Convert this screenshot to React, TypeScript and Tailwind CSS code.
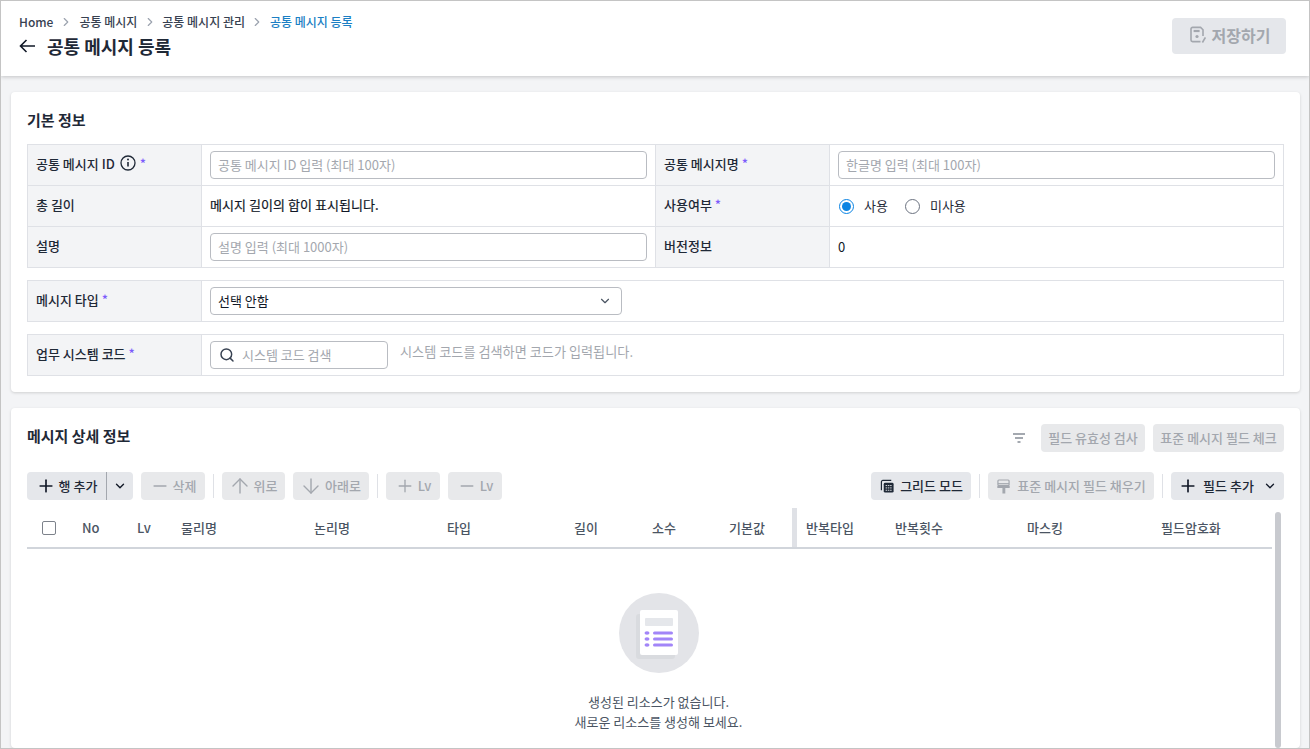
import { ArrowDown, ArrowUp, ChevronDown, ChevronRight, Minus, Plus, Search } from "lucide-react";
import type { ReactNode } from "react";

function Star() {
  return <span className="text-[#7c5cfc] ml-[3px]">*</span>;
}

function Label({ children, star }: { children: ReactNode; star?: boolean }) {
  return (
    <div className="w-[174px] shrink-0 bg-[#f3f4f6] border-r border-[#dfe1e6] pl-[8px] pb-[3px] flex items-center text-[13px] font-medium text-[#1f2937]">
      {children}
      {star && <Star />}
    </div>
  );
}

function TextBox({ placeholder }: { placeholder: string }) {
  return (
    <div className="h-[28px] w-full border border-[#b9bcc2] rounded-[4px] bg-white px-[7px] flex items-center text-[13px] text-[#a3a7ae]">
      {placeholder}
    </div>
  );
}

function Btn({ children, on, className = "" }: { children: ReactNode; on?: boolean; className?: string }) {
  return (
    <div
      className={`h-[28px] rounded-[4px] flex items-center justify-center text-[13px] font-medium whitespace-nowrap ${
        on ? "bg-[#e5e7eb] text-[#1f2937]" : "bg-[#e8e9eb] text-[#a3a7ae]"
      } ${className}`}
    >
      {children}
    </div>
  );
}

function Sep() {
  return <div className="w-px h-[24px] bg-[#dfe1e6] mx-[8px]" />;
}

const leftCols = [
  { name: "No", w: "w-[55px]" },
  { name: "Lv", w: "w-[44px]" },
  { name: "물리명", w: "w-[133px]" },
  { name: "논리명", w: "w-[133px]" },
  { name: "타입", w: "w-[127px]" },
  { name: "길이", w: "w-[78px]" },
  { name: "소수", w: "w-[77px]" },
  { name: "기본값", w: "w-[63px]" },
];

const rightCols = [
  { name: "반복타입", w: "w-[89px]" },
  { name: "반복횟수", w: "w-[132px]" },
  { name: "마스킹", w: "w-[134px]" },
  { name: "필드암호화", w: "w-[100px]" },
];

export default function App() {
  return (
    <div className="h-[749px] overflow-hidden border border-[#c4c4c4] bg-[#f3f4f6] font-['Noto_Sans_CJK_KR','Noto_Sans',sans-serif]">
      <header className="h-[75px] bg-white shadow-[0_1px_4px_rgba(0,0,0,0.2)] flex justify-between pl-[18px] pr-[23px] relative">
        <div>
          <div className="flex items-center h-[19px] mt-[11px] text-[12px] font-medium text-[#374151]">
            <span>Home</span>
            <ChevronRight className="w-[14px] h-[14px] mx-[6px] text-[#9ca3af]" />
            <span>공통 메시지</span>
            <ChevronRight className="w-[14px] h-[14px] mx-[5.5px] text-[#9ca3af]" />
            <span>공통 메시지 관리</span>
            <ChevronRight className="w-[14px] h-[14px] mx-[5.5px] text-[#9ca3af]" />
            <span className="text-[#1b7fc4]">공통 메시지 등록</span>
          </div>
          <div className="flex items-center mt-[2px] h-[26px]">
            <svg viewBox="0 0 16 14" className="w-[16px] h-[14px] text-[#111827]" fill="none" stroke="currentColor" strokeWidth="1.6">
              <path d="M16 7H1.5M7.5 1L1.5 7l6 6" />
            </svg>
            <h1 className="ml-[12px] text-[18px] font-bold text-[#1f2937]">공통 메시지 등록</h1>
          </div>
        </div>
        <div className="mt-[17px] w-[114px] h-[36px] pb-[2px] rounded-[4px] bg-[#e5e7eb] flex items-center justify-center text-[16px] font-bold text-[#a3a7ae]">
          <svg viewBox="0 0 16 18" className="w-[16px] h-[18px] mr-[6px] ml-[2px]" fill="none" stroke="currentColor" strokeWidth="1.6">
            <path d="M10.5 15.6H2.6A1.6 1.6 0 0 1 1 14V3a1.6 1.6 0 0 1 1.6-1.6h8L13 3.8V10" />
            <path d="M3.6 5h6" strokeWidth="2.2" />
            <circle cx="7" cy="10.5" r="1.6" fill="currentColor" stroke="none" />
            <path d="M15.4 11.5l-3 5" />
          </svg>
          저장하기
        </div>
      </header>

      <section className="mt-[16px] ml-[10px] mr-[9px] h-[300px] bg-white rounded-[4px] shadow-[0_1px_3px_rgba(0,0,0,0.15)] px-[16px]">
        <h2 className="pt-[17px] h-[52px] text-[15px] leading-[22px] font-bold text-[#1f2937]">기본 정보</h2>
        <div className="border border-[#dfe1e6] text-[13px]">
          <div className="flex h-[41px] border-b border-[#dfe1e6]">
            <Label star>
              공통 메시지 ID
              <svg viewBox="0 0 16 16" className="w-[16px] h-[16px] ml-[5px] mr-[1px] mb-[2px] text-[#1f2937]" fill="none" stroke="currentColor" strokeWidth="1.3">
                <circle cx="8" cy="8" r="7" />
                <path d="M8 7v4.5" strokeWidth="1.6" />
                <circle cx="8" cy="4.6" r="1" fill="currentColor" stroke="none" />
              </svg>
            </Label>
            <div className="w-[454px] shrink-0 border-r border-[#dfe1e6] px-[8px] flex items-center">
              <TextBox placeholder="공통 메시지 ID 입력 (최대 100자)" />
            </div>
            <Label star>공통 메시지명</Label>
            <div className="flex-1 px-[8px] flex items-center">
              <TextBox placeholder="한글명 입력 (최대 100자)" />
            </div>
          </div>
          <div className="flex h-[41px] border-b border-[#dfe1e6]">
            <Label>총 길이</Label>
            <div className="w-[454px] shrink-0 border-r border-[#dfe1e6] px-[8px] pb-[3px] flex items-center text-[#111827] [-webkit-text-stroke:0.2px_#111827] tracking-[0.05px]">
              메시지 길이의 합이 표시됩니다.
            </div>
            <Label star>사용여부</Label>
            <div className="flex-1 px-[9px] flex items-center text-[#1f2937]">
              <span className="w-[15px] h-[15px] rounded-full border-[1.5px] border-[#0b84e3] flex items-center justify-center">
                <span className="w-[9px] h-[9px] rounded-full bg-[#0b84e3]" />
              </span>
              <span className="ml-[10px]">사용</span>
              <span className="ml-[17px] w-[15px] h-[15px] rounded-full border-[1.5px] border-[#6b7280]" />
              <span className="ml-[10px]">미사용</span>
            </div>
          </div>
          <div className="flex h-[40px]">
            <Label>설명</Label>
            <div className="w-[454px] shrink-0 border-r border-[#dfe1e6] px-[8px] flex items-center">
              <TextBox placeholder="설명 입력 (최대 1000자)" />
            </div>
            <Label>버전정보</Label>
            <div className="flex-1 px-[8px] flex items-center text-[#111827]">0</div>
          </div>
        </div>

        <div className="mt-[12px] flex h-[42px] border border-[#dfe1e6]">
          <Label star>메시지 타입</Label>
          <div className="pl-[8px] flex items-center">
            <div className="w-[412px] h-[28px] border border-[#b9bcc2] rounded-[4px] pl-[7px] pr-[9px] flex items-center justify-between text-[13px] text-[#111827]">
              선택 안함
              <ChevronDown className="w-[14px] h-[14px] text-[#4b5563]" />
            </div>
          </div>
        </div>

        <div className="mt-[12px] flex h-[42px] border border-[#dfe1e6]">
          <Label star>업무 시스템 코드</Label>
          <div className="pl-[8px] flex items-center">
            <div className="w-[178px] h-[28px] border border-[#b9bcc2] rounded-[4px] pl-[8px] flex items-center text-[13px] text-[#a3a7ae]">
              <Search className="w-[16px] h-[16px] text-[#374151]" strokeWidth={2.2} />
              <span className="ml-[7px]">시스템 코드 검색</span>
            </div>
            <span className="ml-[12px] mb-[6px] text-[13.15px] text-[#a3a7ae]">시스템 코드를 검색하면 코드가 입력됩니다.</span>
          </div>
        </div>
      </section>

      <section className="mt-[16px] ml-[10px] mr-[9px] h-[340px] bg-white rounded-[4px] shadow-[0_1px_3px_rgba(0,0,0,0.15)] px-[16px]">
        <div className="flex items-center justify-between pt-[16px] h-[44px]">
          <h2 className="text-[15px] font-bold text-[#1f2937] pb-[3px]">메시지 상세 정보</h2>
          <div className="flex items-center">
            <svg viewBox="0 0 14 10" className="w-[14px] h-[10px] mr-[15px] text-[#4b5563]" fill="none" stroke="currentColor" strokeWidth="1.2">
              <path d="M1 1h12M3 5h8M5.5 9h3" />
            </svg>
            <Btn className="w-[104px] text-[12px]">필드 유효성 검사</Btn>
            <Btn className="w-[131px] ml-[8px] text-[12px]">표준 메시지 필드 체크</Btn>
          </div>
        </div>

        <div className="flex items-center justify-between mt-[20px]">
          <div className="flex items-center">
            <Btn on className="w-[106px]">
              <div className="flex-1 flex items-center justify-center border-r border-[#a3a7ae] h-full">
                <Plus className="w-[20px] h-[20px] mr-[3px] text-[#111827]" strokeWidth={2} />
                행 추가
              </div>
              <div className="w-[26px] flex justify-center">
                <ChevronDown className="w-[14px] h-[14px] text-[#111827]" strokeWidth={2.4} />
              </div>
            </Btn>
            <Btn className="w-[64px] ml-[8px]">
              <Minus className="w-[20px] h-[20px] mr-[3px]" />
              삭제
            </Btn>
            <Sep />
            <Btn className="w-[63px]">
              <ArrowUp className="w-[24px] h-[24px] mr-[2px] -ml-[2px]" strokeWidth={1.4} />
              위로
            </Btn>
            <Btn className="w-[76px] ml-[8px]">
              <ArrowDown className="w-[24px] h-[24px] mr-[2px] -ml-[2px]" strokeWidth={1.4} />
              아래로
            </Btn>
            <Sep />
            <Btn className="w-[54px]">
              <Plus className="w-[20px] h-[20px] mr-[3px]" strokeWidth={1.6} />
              Lv
            </Btn>
            <Btn className="w-[54px] ml-[8px]">
              <Minus className="w-[20px] h-[20px] mr-[3px]" strokeWidth={1.6} />
              Lv
            </Btn>
          </div>
          <div className="flex items-center">
            <Btn on className="w-[100px]">
              <svg viewBox="0 0 16 16" className="w-[15px] h-[15px] mr-[5px] ml-[1px] text-[#1f2937]" fill="none" stroke="currentColor" strokeWidth="1.3">
                <path d="M1.5 12V3A1.5 1.5 0 0 1 3 1.5h9" />
                <rect x="4" y="4" width="10.5" height="10.5" rx="1.5" fill="currentColor" stroke="none" />
                <path d="M6 7h6.5M6 9.5h6.5M6 12h6.5" stroke="#e5e7eb" strokeWidth="1" strokeDasharray="1.6 0.8" />
              </svg>
              그리드 모드
            </Btn>
            <Sep />
            <Btn className="w-[166px] text-[12.2px]">
              <svg viewBox="0 0 14 16" className="w-[13px] h-[15px] mr-[7px] ml-[1px]" fill="none" stroke="currentColor" strokeWidth="1.3">
                <rect x="1" y="1" width="12" height="6" rx="1" />
                <path d="M1 5h12" />
                <path d="M1 7.5v1.5h5.5V15h1.8V9H13V7.5" fill="currentColor" />
              </svg>
              표준 메시지 필드 채우기
            </Btn>
            <Sep />
            <Btn on className="w-[113px]">
              <Plus className="w-[20px] h-[20px] mr-[5px] text-[#111827]" strokeWidth={2} />
              필드 추가
              <ChevronDown className="w-[14px] h-[14px] ml-[9px] text-[#111827]" strokeWidth={2.2} />
            </Btn>
          </div>
        </div>

        <div className="relative mt-[8px] h-[240px] pr-[12px]">
          <div className="absolute right-[3px] top-[4px] bottom-0 w-[6px] rounded-full bg-[#c8cacf]" />
          <div className="flex h-[41px] border-b-[2px] border-[#d1d5db] text-[13px] font-medium text-[#4b5563]">
            <div className="w-[55px] shrink-0 pl-[15px] pt-[13px]">
              <div className="w-[14px] h-[14px] border-[1.5px] border-[#7d828b] rounded-[2px]" />
            </div>
            {leftCols.map((c) => (
              <div key={c.name} className={`${c.w} shrink-0 pt-[10px]`}>
                {c.name}
              </div>
            ))}
            <div className="w-[5px] shrink-0 bg-[#dfe1e6] mr-[9px]" />
            {rightCols.map((c) => (
              <div key={c.name} className={`${c.w} shrink-0 pt-[10px]`}>
                {c.name}
              </div>
            ))}
          </div>

          <div className="flex flex-col items-center pt-[44px] ml-[12px] pl-[6px]">
            <div className="w-[80px] h-[80px] rounded-full bg-[#e3e4e8]">
              <svg viewBox="0 0 80 80" className="w-[80px] h-[80px]">
                <rect x="17" y="21" width="39" height="45" rx="3" fill="#d9dbdf" />
                <rect x="21" y="17" width="38" height="45" rx="2" fill="#ffffff" />
                <rect x="26" y="25" width="28" height="8" rx="1" fill="#e5e7eb" />
                <ellipse cx="28" cy="40" rx="2.5" ry="1.7" fill="#a285f8" />
                <ellipse cx="28" cy="46" rx="2.5" ry="1.7" fill="#a285f8" />
                <ellipse cx="28" cy="52" rx="2.5" ry="1.7" fill="#a285f8" />
                <rect x="34" y="38.5" width="20" height="3" rx="1.5" fill="#a285f8" />
                <rect x="34" y="44.5" width="20" height="3" rx="1.5" fill="#a285f8" />
                <rect x="34" y="50.5" width="20" height="3" rx="1.5" fill="#a285f8" />
              </svg>
            </div>
            <p className="mt-[19px] text-[13px] leading-[20px] text-[#4b5563] text-center">
              생성된 리소스가 없습니다.
              <br />
              새로운 리소스를 생성해 보세요.
            </p>
          </div>
        </div>
      </section>
    </div>
  );
}
